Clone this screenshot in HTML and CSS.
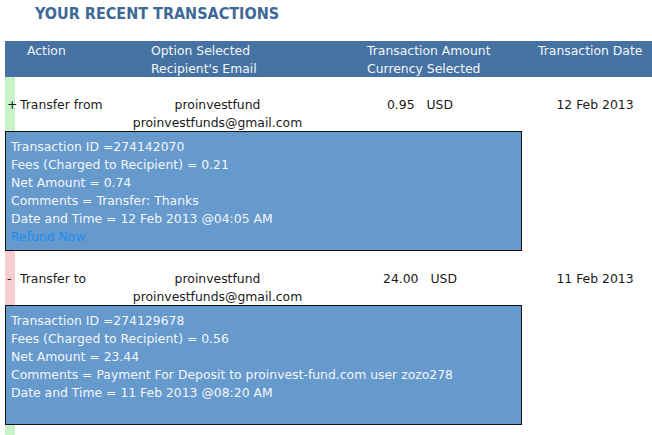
FILE: index.html
```html
<!DOCTYPE html>
<html lang="en">
<head>
    <meta charset="UTF-8">
    <link rel="stylesheet" href="styles.css">
</head>
<body>
    <div class="page">
        <h2 class="title">YOUR RECENT TRANSACTIONS</h2>

        <div class="head">
            <div class="col c1">Action</div>
            <div class="col c2">Option Selected<br>Recipient's Email</div>
            <div class="col c3">Transaction Amount<br>Currency Selected</div>
            <div class="col c4">Transaction Date</div>
        </div>

        <div class="row in">
            <div class="col c1"><span class="sign">+</span>Transfer from</div>
            <div class="col c2 center">proinvestfund<br>proinvestfunds@gmail.com</div>
            <div class="col c3 center">0.95<span class="cur">USD</span></div>
            <div class="col c4 center">12 Feb 2013</div>
        </div>
        <div class="details">
            <div>Transaction ID =274142070</div>
            <div>Fees (Charged to Recipient) = 0.21</div>
            <div>Net Amount = 0.74</div>
            <div>Comments = Transfer: Thanks</div>
            <div>Date and Time = 12 Feb 2013 @04:05 AM</div>
            <a class="refund" href="#">Refund Now</a>
        </div>

        <div class="row out">
            <div class="col c1"><span class="sign">-</span>Transfer to</div>
            <div class="col c2 center">proinvestfund<br>proinvestfunds@gmail.com</div>
            <div class="col c3 center">24.00<span class="cur">USD</span></div>
            <div class="col c4 center">11 Feb 2013</div>
        </div>
        <div class="details">
            <div>Transaction ID =274129678</div>
            <div>Fees (Charged to Recipient) = 0.56</div>
            <div>Net Amount = 23.44</div>
            <div>Comments = Payment For Deposit to proinvest-fund.com user zozo278</div>
            <div>Date and Time = 11 Feb 2013 @08:20 AM</div>
        </div>

        <div class="row in tail"></div>
    </div>
</body>
</html>
```

FILE: styles.css
```css
* {
    margin: 0;
    padding: 0;
    box-sizing: border-box;
}

body {
    font-family: "DejaVu Sans", Verdana, sans-serif;
    font-size: 12.4px;
    line-height: 18px;
    color: #1a1a1a;
    background: #fff;
    overflow: hidden;
}

.page {
    width: 655px;
    padding-left: 5px;
}

.title {
    font-family: "DejaVu Sans Condensed", "DejaVu Sans", sans-serif;
    font-size: 16px;
    font-weight: bold;
    line-height: 20px;
    color: #3d6996;
    padding: 4px 0 17px 30px;
}

.head,
.row {
    display: grid;
    grid-template-columns: 125px 175px 230px 120px;
}

.head {
    background: #4572a1;
    color: #f2f6fb;
    padding-top: 1px;
    height: 36px;
}

.head .c1 { padding-left: 22px; }
.head .c2 { padding-left: 21px; }
.head .c3 { padding-left: 62px; }
.head .c4 { padding-left: 3px; }

.row {
    padding-top: 19px;
    height: 54px;
}

.row.in {
    background: linear-gradient(to right, #c8f3c8 10px, transparent 10px);
}

.row.out {
    background: linear-gradient(to right, #f6cccc 10px, transparent 10px);
}

.row.tail {
    height: 10px;
    padding: 0;
}

.row .c1 {
    padding-left: 2px;
}

.sign {
    display: inline-block;
    width: 13px;
}

.center {
    text-align: center;
}

.cur {
    margin-left: 12px;
}

.details {
    width: 517px;
    height: 120px;
    background: #6699cc;
    border: 1px solid #111;
    color: #f3f6fb;
    padding: 6px 5px 0;
}

.refund {
    color: #1e8cf0;
    text-decoration: none;
}
```
